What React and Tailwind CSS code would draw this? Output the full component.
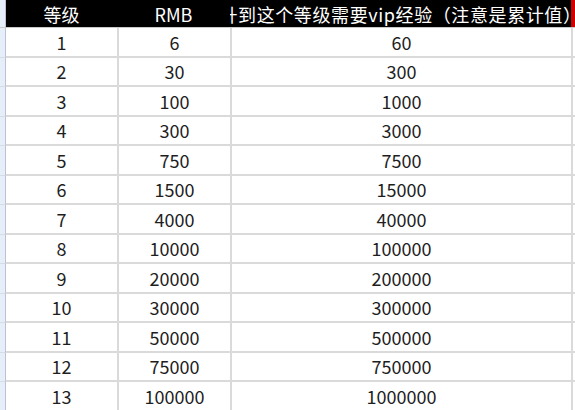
import React from 'react';

const rows = [
    [1, 6, 60],
    [2, 30, 300],
    [3, 100, 1000],
    [4, 300, 3000],
    [5, 750, 7500],
    [6, 1500, 15000],
    [7, 4000, 40000],
    [8, 10000, 100000],
    [9, 20000, 200000],
    [10, 30000, 300000],
    [11, 50000, 500000],
    [12, 75000, 750000],
    [13, 100000, 1000000],
];

const font = { fontFamily: '"Noto Sans CJK SC", "Microsoft YaHei", "Liberation Sans", sans-serif' };

const App = () => {
    return (
        <div className="w-[575px] h-[410px] overflow-hidden bg-white flex flex-col text-[18px] leading-none" style={font}>
            {/* header */}
            <div className="flex h-[28px] shrink-0 border-b border-[#c9c9c9]">
                <div className="w-[6px] bg-[#e6eef9] border-r border-[#b8c4d6]" />
                <div className="w-[111px] bg-black text-white flex items-center justify-center">等级</div>
                <div className="w-[113px] bg-black text-white flex items-center justify-center">RMB</div>
                <div className="w-[341px] bg-black text-white flex items-center justify-center overflow-hidden whitespace-nowrap">
                    <span className="shrink-0 tracking-[0.6px]">升到这个等级需要vip经验（注意是累计值）</span>
                </div>
                <div className="w-[4px] bg-[#d00000]" />
            </div>

            {rows.map(([lv, rmb, exp]) => (
                <div key={lv} className="flex h-[29.5px] shrink-0 text-[#1e1e1e]">
                    <div className="w-[6px] bg-[#e6eef9] border-r border-b border-r-[#b8c4d6] border-b-[#d4dce8]" />
                    <div className="w-[113px] flex items-center justify-center border-r-2 border-b-2 border-[#dadada]">{lv}</div>
                    <div className="w-[113px] flex items-center justify-center border-r-2 border-b-2 border-[#dadada]">{rmb}</div>
                    <div className="w-[341px] flex items-center justify-center border-r-2 border-b-2 border-[#dadada]">{exp}</div>
                    <div className="flex-1 border-b-2 border-[#dadada]" />
                </div>
            ))}
        </div>
    );
};

export default App;
